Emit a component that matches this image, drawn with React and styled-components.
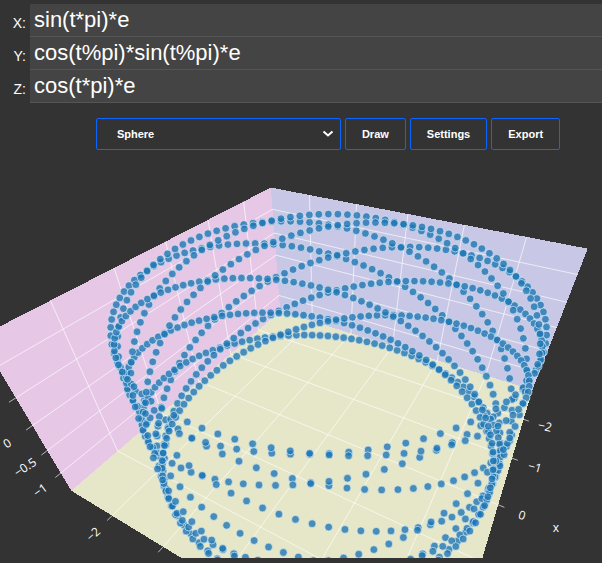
import React from 'react';
import styled, { createGlobalStyle } from 'styled-components';

const GlobalStyle = createGlobalStyle`
  * { box-sizing: border-box; }
  body {
    margin: 0;
    background: #333;
    color: #fff;
    font-family: "Liberation Sans", Arial, sans-serif;
  }
`;

const Page = styled.main`
  display: flex;
  flex-direction: column;
  overflow: hidden;
`;

const Formulas = styled.form`
  display: flex;
  flex-direction: column;
  padding-top: 4px;
`;

const FormulaRow = styled.div`
  display: flex;
  height: 33px;
`;

const FormulaLabel = styled.label`
  width: 30px;
  padding: 10px 4px 0 0;
  font-size: 14px;
  line-height: 18px;
  text-align: right;
`;

const FormulaInput = styled.input`
  flex: 1;
  min-width: 0;
  padding: 0 4px;
  border: 0;
  border-bottom: 1px solid #555;
  border-radius: 0;
  outline: none;
  background: #444;
  color: #fff;
  font: 22px "Liberation Sans", Arial, sans-serif;
`;

const Toolbar = styled.div`
  display: flex;
  justify-content: center;
  gap: 4px;
  padding: 15px 0 8px 54px;
`;

const SelectWrap = styled.div`
  position: relative;
  width: 245px;
`;

const Select = styled.select`
  width: 100%;
  height: 32px;
  padding: 0 20px;
  border: 1px solid #0a66ff;
  border-radius: 2px;
  appearance: none;
  background: #333;
  color: #fff;
  font: bold 11px "Liberation Sans", Arial, sans-serif;
`;

const Arrow = styled.svg`
  position: absolute;
  right: 7px;
  top: 12px;
  width: 12px;
  height: 8px;
  pointer-events: none;
`;

const Button = styled.button`
  height: 32px;
  padding: 0 16px;
  border: 1px solid #0a66ff;
  border-radius: 2px;
  background: #333;
  color: #fff;
  font: bold 11px "Liberation Sans", Arial, sans-serif;
`;

const Scene = styled.svg`
  display: block;
  width: 100%;
  height: auto;
`;

const Wall = styled.polygon`
  fill: ${(p) => p.$fill};
  shape-rendering: crispEdges;
`;

const GridLine = styled.line`
  stroke: #fff;
  stroke-opacity: 0.65;
  stroke-width: 1;
`;

const Marker = styled.circle`
  fill: #1f77b4;
  fill-opacity: 0.8;
  stroke: #e4f3fb;
  stroke-opacity: 0.8;
  stroke-width: 0.8;
`;

const TickLabel = styled.text`
  fill: #fff;
  font: 12px "Open Sans", "Noto Sans", sans-serif;
  text-anchor: middle;
  dominant-baseline: central;
`;

// Axis half-ranges: x and z share one, the vertical axis is half as long.
const R = 2.89;
const Y = 1.43;

// Camera matrix: scene coordinates to the 602-wide drawing.
const CAMERA = [
  [-0.212617, -0.101245, 0.133456, 1.094315],
  [0.002269, -0.284867, 0.001571, 1.234393],
  [-0.098057, -0.093194, -0.053592, 1],
];

function project([x, y, z]) {
  const [u, v, w] = CAMERA.map((m) => m[0] * x + m[1] * y + m[2] * z + m[3]);
  return [(300 * u) / w, (300 * v) / w];
}

const outline = (corners) => corners.map((c) => project(c).join(',')).join(' ');

const walls = [
  { fill: '#e6e6c8', corners: [[-R, -Y, -R], [-R, -Y, R], [R, -Y, R], [R, -Y, -R]] },
  { fill: '#e6c8e6', corners: [[-R, -Y, -R], [-R, Y, -R], [R, Y, -R], [R, -Y, -R]] },
  { fill: '#c8c8e6', corners: [[-R, -Y, -R], [-R, Y, -R], [-R, Y, R], [-R, -Y, R]] },
];

const TICK = 0.09;
const segments = [];
[-2, -1, 0, 1, 2].forEach((n) => {
  segments.push([[n, -Y, -R], [n, -Y, R + TICK]], [[-R, -Y, n], [R + TICK, -Y, n]]);
  segments.push([[n, -Y, -R], [n, Y, -R]], [[-R, -Y, n], [-R, Y, n]]);
});
[-1, -0.5, 0, 0.5, 1].forEach((n) => {
  segments.push([[-R, n, -R], [R + TICK, n, -R]], [[-R, n, -R], [-R, n, R]]);
});

const gridLines = segments.map((ends) => ends.map(project));

const points = Array.from({ length: 1000 }, (_, i) => {
  const t = i * 0.02;
  const u = t % Math.PI;
  return project([
    Math.sin(t * Math.PI) * Math.E,
    Math.cos(u) * Math.sin(u) * Math.E,
    Math.cos(t * Math.PI) * Math.E,
  ]);
});

const labels = [
  { text: '0', x: 7, y: 443, angle: -32 },
  { text: '−0.5', x: 25, y: 467, angle: -34 },
  { text: '−1', x: 40, y: 490, angle: -36 },
  { text: '−2', x: 93, y: 534, angle: -42 },
  { text: '−2', x: 545, y: 426, angle: 14 },
  { text: '−1', x: 535, y: 467, angle: 15 },
  { text: '0', x: 522, y: 515, angle: 17 },
  { text: 'x', x: 556, y: 527, angle: 0 },
];

const formulas = [
  { name: 'X', value: 'sin(t*pi)*e' },
  { name: 'Y', value: 'cos(t%pi)*sin(t%pi)*e' },
  { name: 'Z', value: 'cos(t*pi)*e' },
];

function Plot() {
  return (
    <Scene viewBox="0 158 602 400" role="img" aria-label="3D scatter plot">
      {walls.map((w) => (
        <Wall key={w.fill} $fill={w.fill} points={outline(w.corners)} />
      ))}
      {gridLines.map(([a, b], i) => (
        <GridLine key={i} x1={a[0]} y1={a[1]} x2={b[0]} y2={b[1]} />
      ))}
      {points.map(([x, y], i) => (
        <Marker key={i} cx={x} cy={y} r="3.9" />
      ))}
      {labels.map((l) => (
        <TickLabel
          key={`${l.x}-${l.y}`}
          transform={`translate(${l.x} ${l.y}) rotate(${l.angle})`}
        >
          {l.text}
        </TickLabel>
      ))}
    </Scene>
  );
}

export default function App() {
  return (
    <Page>
      <GlobalStyle />
      <Formulas>
        {formulas.map((f) => (
          <FormulaRow key={f.name}>
            <FormulaLabel htmlFor={`formula-${f.name}`}>{f.name}:</FormulaLabel>
            <FormulaInput
              id={`formula-${f.name}`}
              type="text"
              spellCheck={false}
              defaultValue={f.value}
            />
          </FormulaRow>
        ))}
      </Formulas>
      <Toolbar>
        <SelectWrap>
          <Select aria-label="Preset" defaultValue="Sphere">
            <option>Sphere</option>
          </Select>
          <Arrow viewBox="0 0 12 8" fill="none" stroke="#fff" strokeWidth="2">
            <path d="M1.5 1.5 L6 5.5 L10.5 1.5" />
          </Arrow>
        </SelectWrap>
        <Button type="button">Draw</Button>
        <Button type="button">Settings</Button>
        <Button type="button">Export</Button>
      </Toolbar>
      <Plot />
    </Page>
  );
}
